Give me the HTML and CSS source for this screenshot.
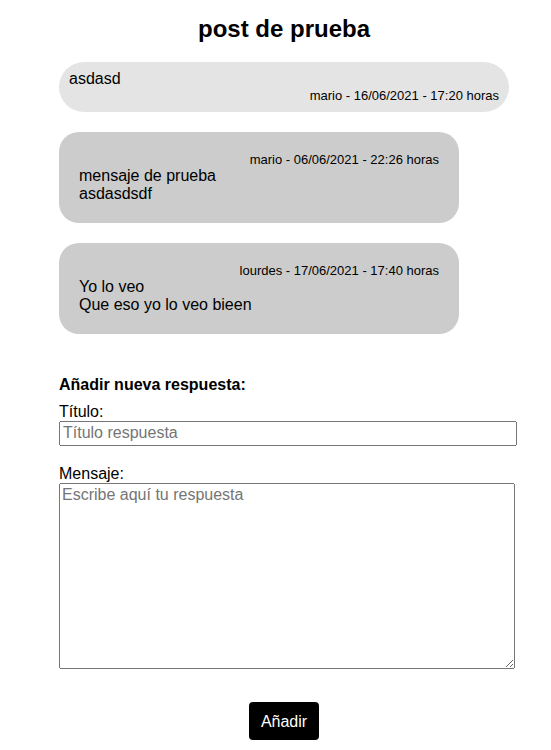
FILE: index.html
```html
<!DOCTYPE html>
<html lang="es">
<head>
<meta charset="utf-8">
<title>post de prueba</title>
<link rel="stylesheet" href="styles.css">
</head>
<body>
<main class="page">
  <h2 class="title">post de prueba</h2>

  <section class="post">
    <div class="post-text">asdasd</div>
    <div class="meta">mario - 16/06/2021 - 17:20 horas</div>
  </section>

  <section class="reply">
    <div class="meta">mario - 06/06/2021 - 22:26 horas</div>
    <div class="reply-text">mensaje de prueba<br>asdasdsdf</div>
  </section>

  <section class="reply">
    <div class="meta">lourdes - 17/06/2021 - 17:40 horas</div>
    <div class="reply-text">Yo lo veo<br>Que eso yo lo veo bieen</div>
  </section>

  <form class="form">
    <div class="form-heading">Añadir nueva respuesta:</div>
    <label class="label" for="titulo">Título:</label>
    <input class="field" id="titulo" type="text" placeholder="Título respuesta">
    <label class="label label-msg" for="mensaje">Mensaje:</label>
    <textarea class="area" id="mensaje" placeholder="Escribe aquí tu respuesta"></textarea>
    <div class="actions">
      <button class="btn" type="button">Añadir</button>
    </div>
  </form>
</main>
</body>
</html>
```

FILE: styles.css
```css
* { box-sizing: content-box; }

body {
  margin: 0;
  font-family: "Liberation Sans", Arial, sans-serif;
  font-size: 16px;
  color: #000;
  background: #fff;
}

.page {
  width: 450px;
  margin-left: 59px;
  padding-top: 15px;
}

.title {
  margin: 0 0 19px;
  font-size: 24px;
  font-weight: bold;
  text-align: center;
}

.post {
  background: #e4e4e4;
  border-radius: 25px;
  padding: 8px 10px 9px;
  margin-bottom: 20px;
}

.meta {
  font-size: 13px;
  text-align: right;
}

.reply {
  width: 360px;
  background: #cccccc;
  border-radius: 20px;
  padding: 20px;
  margin-bottom: 20px;
}

.form {
  margin-top: 42px;
}

.form-heading {
  font-weight: bold;
  margin-bottom: 9px;
}

.label {
  display: block;
}

.label-msg {
  margin-top: 19px;
}

.field {
  display: block;
  width: 100%;
  margin: 0;
  padding: 1px 2px 2px;
  font-family: "Liberation Sans", Arial, sans-serif;
  font-size: 16px;
}

.area {
  display: block;
  width: 100%;
  height: 180px;
  margin: 0;
  font-family: "Liberation Sans", Arial, sans-serif;
  font-size: 16px;
}

.actions {
  display: flex;
  justify-content: center;
  margin-top: 33px;
}

.btn {
  background: #000;
  color: #fff;
  border: none;
  border-radius: 4px;
  padding: 11px 12px 9px;
  font-family: "Liberation Sans", Arial, sans-serif;
  font-size: 16px;
}
```
